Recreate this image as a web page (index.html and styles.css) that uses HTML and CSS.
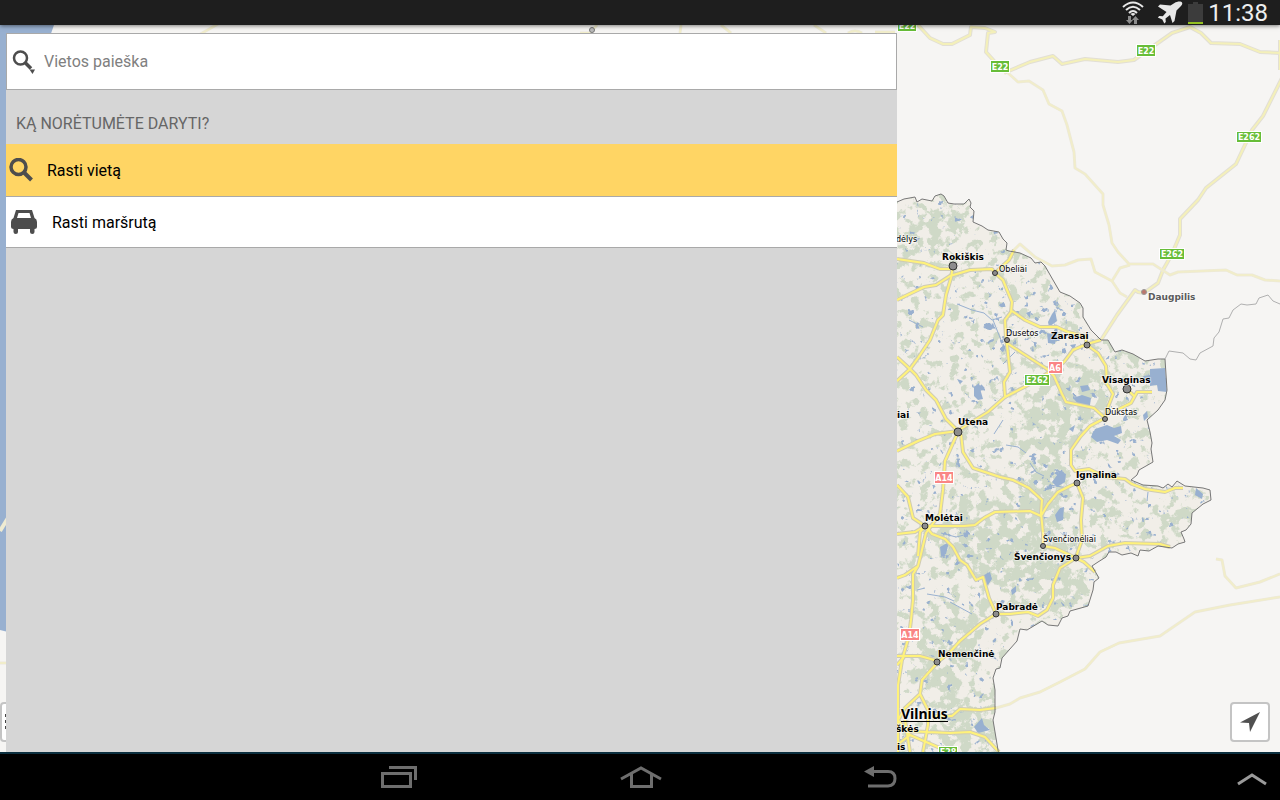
FILE: index.html
```html
<!DOCTYPE html>
<html lang="lt">
<head>
<meta charset="utf-8">
<meta name="viewport" content="width=device-width, initial-scale=1">
<title>Vietos paieška</title>
<link rel="stylesheet" href="styles.css">
</head>
<body>
<header class="status">
  <svg class="status-icon" width="22" height="24" viewBox="0 0 22 24" aria-hidden="true">
    <g fill="none" stroke="#e8e8e8" stroke-width="2"><path d="M1 6Q11-3 21 6"/><path d="M4 9Q11 2.500 18 9"/><path d="M7 12Q11 8 15 12"/></g>
    <path fill="#e8e8e8" d="M8.500 13Q11 11 13.500 13L11 15z"/>
    <path fill="#8c8c8c" d="M6 15h3v4h2l-3.500 4L4 19h2zM12 23v-4h-2l3.500-4 3.500 4h-2v4z"/>
  </svg>
  <svg class="status-icon plane" width="26" height="24" viewBox="0 0 26 24" aria-hidden="true">
    <path fill="#e8e8e8" d="M25 1.500c.8 1.200-.2 2.800-1.500 4L19.500 9.500l-2 10.500-2 2-2.500-8-4.500 3.500.3 3.500-1.500 1.500-2-4-4.500-2 1.500-1.500 3.500.2L9.500 11 1 5.500 3 3.500l10.500 1 4-2.500C20 .5 24 0 25 1.500z"/>
  </svg>
  <svg class="status-icon" width="15" height="24" viewBox="0 0 15 24" aria-hidden="true">
    <path fill="#3c3c3c" d="M0 3h5V1h5v2h5v18H0z"/><path fill="#93c01f" d="M0 21h15v2H0z"/>
  </svg>
  <time class="clock">11:38</time>
</header>

<main class="stage">
  <svg class="map" viewBox="0 25 1280 727" preserveAspectRatio="xMinYMin slice" role="img" aria-label="Lietuva">
    <defs>
      <path id="land" d="M880 208L897 202 904 199 915 197 917 202 922 199 932 201 935 196 941 194 944 196 948 203 954 204 964 204 969 199 971 203 970 207 974 211 973 222 982 226 988 230 999 232 1003 239 1007 243 1006 250 1009 251 1020 253 1031 258 1035 263 1041 262 1045 266 1053 280 1060 292 1070 296 1080 303 1083 308 1083 317 1091 330 1101 340 1108 340 1115 352 1122 350 1133 354 1145 361 1158 359 1165 359 1167 390 1165 400 1158 410 1147 420 1150 432 1152 443 1151 449 1153 462 1146 466 1139 470 1137 475 1131 480 1143 485 1158 486 1163 488 1168 484 1172 487 1177 481 1185 486 1203 488 1210 490 1211 500 1203 504 1192 513 1191 524 1186 530 1181 532 1184 539 1185 542 1178 544 1172 548 1158 546 1149 551 1140 550 1138 556 1131 553 1122 555 1116 552 1109 552 1106 557 1098 562 1092 566 1099 578 1094 582 1093 590 1088 606 1070 611 1068 616 1062 618 1058 626 1048 625 1042 621 1027 630 1020 629 1017 641 1002 658 1000 668 996 669 993 678 995 690 995 712 993 720 999 756 880 756z"/>
      <clipPath id="land-clip"><use href="#land"/></clipPath>
      <filter id="woods" filterUnits="userSpaceOnUse" x="890" y="190" width="330" height="562" color-interpolation-filters="sRGB">
        <feGaussianBlur in="SourceGraphic" stdDeviation="6" result="area"/>
        <feTurbulence type="fractalNoise" baseFrequency="0.1" numOctaves="5" seed="8"/>
        <feColorMatrix values="0 0 0 0 0  0 0 0 0 0  0 0 0 0 0  1 0 0 0 0" result="noise"/>
        <feComposite in="noise" in2="area" operator="arithmetic" k2="1" k3="0.17"/>
        <feColorMatrix values="0 0 0 0 0.81  0 0 0 0 0.85  0 0 0 0 0.78  0 0 0 10 -5.500"/>
      </filter>
      <filter id="ponds" filterUnits="userSpaceOnUse" x="890" y="190" width="330" height="562" color-interpolation-filters="sRGB">
        <feGaussianBlur in="SourceGraphic" stdDeviation="4" result="area"/>
        <feTurbulence type="fractalNoise" baseFrequency="0.13" numOctaves="3" seed="23"/>
        <feColorMatrix values="0 0 0 0 0  0 0 0 0 0  0 0 0 0 0  1 0 0 0 0" result="noise"/>
        <feComposite in="noise" in2="area" operator="arithmetic" k2="1" k3="0.09"/>
        <feColorMatrix values="0 0 0 0 0.6  0 0 0 0 0.69  0 0 0 0 0.81  0 0 0 12 -8.500"/>
      </filter>
      <g id="outer-roads">
        <path d="M918 25L930 38 943 44 952 44 970 35 971 27 985 28 995 32 988 33 986 52 995 62M1004 73L1030 62 1053 56 1062 64 1085 59 1118 62 1134 60 1155 45 1172 33 1190 27 1201 33 1211 43 1240 44 1260 52 1280 53M1282 78L1263 116 1252 130 1236 164 1206 188 1198 200 1180 219 1180 235 1172 254 1163 270 1158 283 1144 293 1138 292 1135 290 1117 315 1101 340M1280 40V70"/>
      </g>
      <g id="minor-roads">
        <path d="M1008 73L1018 82 1029 81 1043 90 1049 104 1062 111 1067 125 1074 152 1075 168 1085 174 1103 194 1103 205 1109 225 1112 243 1118 252 1129 264 1153 264 1170 275 1178 272 1226 270 1237 275 1252 275 1265 280 1280 281M1014 250L1020 244 1035 257 1052 266 1065 265 1078 260 1091 259 1095 272 1112 281 1120 293 1127 297M1112 281L1120 268 1130 265M996 708L1010 704 1020 698 1040 692 1060 682 1085 669 1100 652 1119 643 1160 636 1195 612 1230 605 1280 597M1216 559L1222 560 1225 576 1236 588 1260 582 1280 574M197 36L218 24M580 33H590L597 25M680 33L681 25M721 25L731 33M814 25L826 33M848 33Q855 29 862 33M875 32H895M0 663H8"/>
      </g>
      <g id="main-roads">
        <path d="M897 259L924 263 940 269 952 269M897 300L924 287 936 285 950 276 970 270 992 269 995 273M953 266L951 278 946 295 943 315 938 320 930 340 918 358 910 369 897 381M897 357L910 369 916 375 926 390 936 400 946 419 958 431M1014 250L1009 260 995 273 1003 280 1012 302 1011 312 1005 320 1006 339 1007 345 1010 372 1004 382 1005 396M1012 311L1025 320 1040 327 1057 327 1068 332 1085 336 1087 345M1007 343L1022 353 1047 369 1054 376 1062 394 1066 402 1080 405 1094 408 1105 418M1101 340L1087 344 1073 350 1064 362 1036 381 1005 397 988 412 970 423 958 431"/>
        <path d="M1087 345L1098 353 1106 366 1107 384 1113 394 1108 407 1105 418 1090 426 1080 437 1071 450 1071 465 1075 471 1089 469 1105 477 1125 479 1132 484 1145 489 1165 492 1175 488 1183 488M1117 410L1131 403 1137 392 1152 392M1127 389L1135 397M897 451L918 441 935 434 958 431M958 432L945 461 943 490 940 514 931 526 926 533 921 554 918 566 913 574 913 600 911 620 909 636 902 660 898 685 898 752M918 566L905 575 897 578M925 526L920 532 918 556M961 434L963 452 973 468 1000 477 1013 480 1029 488 1042 500 1041 513 1043 533 1043 546 1055 548 1076 558M925 526H964L975 525 984 518 995 512 1030 511 1041 516 1048 504 1058 492 1070 486 1077 483 1083 498 1081 520 1082 540 1076 557"/>
        <path d="M1095 572L1084 562 1076 558 1090 556 1108 546 1125 543 1160 544 1170 547M1076 558L1060 568 1053 585 1053 598 1047 610 1038 616 1028 612 1010 614 996 614 989 598 983 577 976 580 967 565 960 560 953 547 945 539 932 534 925 526 913 518 908 497 897 485M897 534L915 532 925 526M996 614L980 624 960 641 950 652 938 662 922 680 920 694 905 708 898 720 910 735 940 748M897 656L920 656 938 661M920 694L928 710 928 725 923 752M935 716H952L960 709 980 710 996 708M905 731L950 733 970 732 985 737 999 752M897 665L904 657M905 720L910 752M897 745L910 735"/>
      </g>
    </defs>
    <rect class="abroad" y="25" width="1280" height="1200"/>
    <path class="sea" d="M0 25H54Q48 40 46 60L30 600 8 632 0 630z"/>
    <path class="spit" d="M0 531L8 518"/>
    <use class="land" href="#land"/>
    <g clip-path="url(#land-clip)">
      <g filter="url(#woods)">
        <path d="M905 218L960 210 965 235 925 255 905 250zM1040 375L1110 370 1105 410 1060 450 1070 490 1060 540 1095 590 1060 610 1030 600 1000 580 950 570 930 540 960 500 1010 500 1040 460 1020 430zM930 620L985 600 980 640 950 700 910 680zM945 690L990 700 995 750 940 745zM1085 500L1110 490 1115 515 1090 520zM1180 505L1200 500 1185 535 1160 520zM1100 305L1150 360 1110 360z"/>
      </g>
      <g filter="url(#ponds)">
        <path d="M1000 300L1070 300 1070 340 1010 350 990 390 980 330zM1060 380L1100 390 1090 410 1060 400zM1025 450L1075 460 1060 500 1035 490zM935 525L985 525 970 570 930 545zM985 370L975 385 975 405 985 405z"/>
      </g>
      <g class="lake">
        <path d="M974 387l5-4 2 9 2 7-5 1-4-4zM1143 376l7-1 0-6 15-1 2 24-9-1-1-6-7 1 0-5-5-1zM1095 429l12-4 7 3 7-2 1 7-8 3 7 4-3 4-11-4-10 2-6-5zM1073 398l9-3 9 3-1 7-10 1zM1080 386l8-1 2 5-8 2zM1048 322l4-8 3-4 2 11-8 6zM1047 333l10 2-2 9-7-1zM1060 508l4-1-1 13-6 2-2-7zM1060 471l6 3-1 8-8 5-5-5zM960 384l-3-5 6 2zM974 727l8-9 2 7 6 5-12 3zM1196 488l7 6-1 5-7-4zM1075 425l-6 4 4 3zM940 547l9-5-3 12-5 2zM984 575l6-3 2 7-4 6-5-3zM1011 590l5-4 0 6-4 3zM1143 415l4-4 1 6-4 4zM1026 313l5-2-1 7zM1070 345l6-1-2 6z"/>
        <path class="stream" d="M957 304l15 6 12 3 8 7 10-3M993 320l8 20M1006 445l12 2 8 6M927 594l18 3 9 4M925 588l-8 2M950 602l22 12M941 533l15 4 12-3M1003 420l-9 14M1015 352l-12 12M909 320l8 4 6 3M1148 492l-1 9M1030 463l6 9 8 4M1050 485l18 3"/>
      </g>
    </g>
    <use class="casing outer" href="#outer-roads"/><use class="outer" href="#outer-roads"/>
    <use class="casing minor" href="#minor-roads"/><use class="minor" href="#minor-roads"/>
    <use class="casing" href="#main-roads"/><use class="main-road" href="#main-roads"/>
    <use class="border" href="#land"/>
    <path class="border thin" d="M1165 359L1169 351 1183 353 1190 359 1196 360 1200 353 1213 346 1214 338 1219 332 1223 319 1229 318 1233 310 1241 304 1247 305 1256 304 1259 298 1268 295 1273 301 1280 304"/>
    <g class="town">
      <circle cx="953" cy="266" r="4"/><circle cx="958" cy="432" r="4"/><circle cx="1127" cy="389" r="4"/>
      <circle cx="1087" cy="345" r="3"/><circle cx="925" cy="526" r="3"/><circle cx="1077" cy="483" r="3"/><circle cx="1076" cy="558" r="3"/><circle cx="996" cy="614" r="3"/><circle cx="937" cy="662" r="3"/>
      <circle cx="995" cy="273" r="2.500"/><circle cx="1007" cy="340" r="2.500"/><circle cx="1105" cy="419" r="2.500"/><circle cx="1043" cy="546" r="2.500"/>
      <circle class="faded" cx="592" cy="30" r="2.500"/><circle class="foreign" cx="1144" cy="292" r="2.500"/>
    </g>
    <g class="sign">
      <rect x="898" y="20" width="18" height="11"/><text x="907" y="29">E22</text>
      <rect x="991" y="61" width="18" height="11"/><text x="1000" y="70">E22</text>
      <rect x="1137" y="45" width="18" height="11"/><text x="1146" y="54">E22</text>
      <rect x="1237" y="132" width="24" height="10"/><text x="1249" y="140">E262</text>
      <rect x="1160" y="249" width="24" height="10"/><text x="1172" y="257">E262</text>
      <rect x="1025" y="375" width="24" height="10"/><text x="1037" y="383">E262</text>
      <rect x="939" y="747" width="18" height="11"/><text x="948" y="755">E28</text>
    </g>
    <g class="sign red">
      <rect x="1049" y="362" width="13" height="11"/><text x="1055" y="371">A6</text>
      <rect x="935" y="472" width="18" height="11"/><text x="944" y="481">A14</text>
      <rect x="901" y="629" width="18" height="11"/><text x="910" y="638">A14</text>
    </g>
    <g class="place">
      <text x="942" y="260">Rokiškis</text><text x="1051" y="339">Zarasai</text><text x="1102" y="383">Visaginas</text>
      <text x="958" y="425">Utena</text><text x="1076" y="478">Ignalina</text><text x="925" y="521">Molėtai</text>
      <text x="1014" y="560">Švenčionys</text><text x="996" y="610">Pabradė</text><text x="938" y="657">Nemenčinė</text>
      <text x="897" y="418">iai</text><text x="896" y="732">škės</text><text x="897" y="750">is</text>
      <text class="foreign-name" x="1148" y="300">Daugpilis</text>
    </g>
    <g class="place village">
      <text x="896" y="242">dėlys</text><text x="999" y="272">Obeliai</text><text x="1006" y="336">Dusetos</text>
      <text x="1105" y="415">Dūkstas</text><text x="1043" y="542">Švenčionėliai</text>
    </g>
    <text class="capital" x="901" y="719">Vilnius</text>
    <path class="capital-line" d="M901 721.500H948"/>
  </svg>

  <button class="map-button layers" type="button" aria-label="Meniu">
    <svg width="12" height="16" viewBox="0 0 12 16" aria-hidden="true"><path fill="#444" d="M0 0h3v3H0zM0 6h3v3H0zM0 12h3v3H0zM5 0h7v3H5zM5 6h7v3H5zM5 12h7v3H5z"/></svg>
  </button>
  <button class="map-button locate" type="button" aria-label="Mano vieta">
    <svg width="20" height="20" viewBox="0 0 20 20" aria-hidden="true"><path fill="#505050" d="M20 0L10 20 9 11 0 10.500z"/></svg>
  </button>

  <section class="panel">
    <form class="search">
      <label class="search-label" for="q" aria-label="Vietos paieška">
        <svg width="24" height="24" viewBox="0 0 24 24" aria-hidden="true"><circle cx="8.500" cy="8" r="6.500" fill="none" stroke="#4d4d4d" stroke-width="2.500"/><path d="M13 12.500l6 6" stroke="#4d4d4d" stroke-width="3.500"/><path fill="#4d4d4d" d="M17.500 19.500h5.500L20.500 24z"/></svg>
      </label>
      <input class="search-input" id="q" type="text" placeholder="Vietos paieška">
    </form>
    <h1 class="heading">KĄ NORĖTUMĖTE DARYTI?</h1>
    <ul class="actions">
      <li><button class="action selected" type="button">
        <svg width="24" height="24" viewBox="0 0 24 24" aria-hidden="true"><circle cx="9.500" cy="9" r="7.500" fill="none" stroke="#4d4d4d" stroke-width="3.500"/><path d="M14.500 14l8 8" stroke="#4d4d4d" stroke-width="4"/></svg>
        Rasti vietą</button></li>
      <li><button class="action route" type="button">
        <svg width="26" height="24" viewBox="0 0 26 24" aria-hidden="true"><path fill="#4d4d4d" fill-rule="evenodd" d="M5 0h16l2.500 8Q26 9 26 12v5q0 2-2.500 2v3q0 2-2.200 2T19 22v-3H7v3q0 2-2.200 2t-2.300-2v-3Q0 19 0 17v-5q0-3 2.500-4zm2.500 3L6 8h14l-1.500-5z"/></svg>
        Rasti maršrutą</button></li>
    </ul>
  </section>
</main>

<nav class="navbar" aria-label="Sistema">
  <div class="nav-keys">
    <button class="key" type="button" aria-label="Naujausios"><svg width="38" height="24" viewBox="0 0 38 24" aria-hidden="true"><path fill="none" stroke="#6e6e6e" stroke-width="3" d="M9 2.500h26.500V15M2.500 8.500h28v13h-28z"/></svg></button>
    <button class="key" type="button" aria-label="Pradžia"><svg width="42" height="24" viewBox="0 0 42 24" aria-hidden="true"><path fill="none" stroke="#6e6e6e" stroke-width="3" d="M1 14L21 3l20 11M11.500 9v12.500h20V9"/></svg></button>
    <button class="key" type="button" aria-label="Atgal"><svg width="34" height="24" viewBox="0 0 34 24" aria-hidden="true"><path fill="none" stroke="#6e6e6e" stroke-width="3" d="M8 6.500h16q7 0 7 7t-7 7.500H4"/><path fill="#6e6e6e" d="M0 6.500L10 1v11z"/></svg></button>
  </div>
  <button class="key up" type="button" aria-label="Rodyti"><svg width="30" height="14" viewBox="0 0 30 14" aria-hidden="true"><path fill="none" stroke="#9a9a9a" stroke-width="3" d="M1 12L15 3l14 9"/></svg></button>
</nav>
</body>
</html>
```

FILE: styles.css
```css
* { box-sizing: border-box; }

body {
  margin: 0;
  min-height: 100vh;
  display: grid;
  grid-template-rows: auto 1fr auto;
  font-family: Roboto, "Noto Sans", sans-serif;
  font-size: 16px;
  background: #000;
}

button {
  border: 0;
  padding: 0;
  background: none;
  font: inherit;
  color: inherit;
}

svg { display: block; flex: none; }

.status {
  position: relative;
  z-index: 2;
  display: flex;
  align-items: center;
  justify-content: flex-end;
  gap: 5px;
  height: 25px;
  padding-right: 12px;
  background: #1e1e1e;
  box-shadow: 0 1px 4px rgba(0, 0, 0, 0.5);
}

.plane { margin-left: 8px; }

.clock {
  color: #eee;
  font-size: 24px;
  line-height: 24px;
}

.stage {
  position: relative;
  display: grid;
  grid-template-columns: 891fr 383fr;
  padding: 8px 0 0 6px;
  overflow: hidden;
}

.map {
  position: absolute;
  inset: 0;
  width: 100%;
  height: 100%;
}

.abroad { fill: #f6f5f3; }
.sea { fill: #98b0d0; }
.spit { stroke: #efebd2; stroke-width: 4; }
.land { fill: #f1eee8; }
.lake { fill: #98b0d0; }
.stream { fill: none; stroke: #98b0d0; stroke-width: 1; }

.main-road, .outer, .minor, .casing {
  fill: none;
  stroke-linejoin: round;
}

.casing { stroke: #cfcbb4; stroke-width: 4; }
.main-road { stroke: #fff27a; stroke-width: 2; }
.outer { stroke: #f4f0b9; stroke-width: 2; }
.minor { stroke: #f1edca; stroke-width: 2; }
.casing.outer { stroke: #e2dfd5; stroke-width: 4; }
.casing.minor { stroke: #ebe8dd; stroke-width: 3; }

.border { fill: none; stroke: #777; stroke-width: 1; }
.thin { stroke: #b0b0b0; }

.town { fill: #8c8c8c; stroke: #333; stroke-width: 1; }
.foreign { fill: #bd776b; stroke: #999; }
.faded { fill: #bbb; stroke: #777; }

.sign {
  fill: #67bd38;
  stroke: #fff;
  stroke-width: 2;
  paint-order: stroke;
}

.sign.red { fill: #fa8585; }

.sign text {
  fill: #fff;
  stroke: none;
  font: bold 8px "DejaVu Sans", sans-serif;
  text-anchor: middle;
}

.place {
  font: bold 9px "DejaVu Sans", sans-serif;
  fill: #000;
  stroke: #fff;
  stroke-opacity: 0.5;
  stroke-width: 2;
  paint-order: stroke;
}

.village { font-weight: normal; font-size: 8px; }
.foreign-name { fill: #5c5c5c; }

.capital {
  font: bold 14px "Noto Sans", sans-serif;
  stroke: #fff;
  stroke-opacity: 0.5;
  stroke-width: 2;
  paint-order: stroke;
}

.capital-line { stroke: #000; }

.map-button {
  position: absolute;
  bottom: 10px;
  width: 40px;
  height: 40px;
  display: flex;
  align-items: center;
  justify-content: center;
  background: #fff;
  border: 2px solid #c4c4c4;
  border-radius: 4px;
}

.locate { right: 10px; }

.layers {
  left: 0;
  justify-content: flex-start;
  padding-left: 3px;
}

.panel {
  position: relative;
  background: #d6d6d6;
}

.search {
  display: flex;
  align-items: center;
  height: 57px;
  padding-left: 5px;
  background: #fff;
  border: 1px solid #a9a9a9;
}

.search-input {
  flex: 1;
  min-width: 0;
  height: 100%;
  padding: 0 8px;
  border: 0;
  outline: 0;
  background: none;
  font: inherit;
  color: #000;
}

.search-input::placeholder { color: #808080; opacity: 1; }

.heading {
  margin: 0;
  padding: 22px 10px 8px;
  font-size: 16px;
  font-weight: 400;
  line-height: 24px;
  color: #666;
}

.actions {
  margin: 0;
  padding: 0;
  list-style: none;
}

.action {
  display: flex;
  align-items: center;
  gap: 14px;
  width: 100%;
  height: 51px;
  padding-left: 3px;
  background: #fff;
  border-bottom: 1px solid #a9a9a9;
  color: #000;
  text-align: left;
}

.route { padding-left: 5px; gap: 15px; }

.selected {
  height: 53px;
  background: #ffd564;
}

.navbar {
  display: grid;
  grid-template-columns: 1fr auto 1fr;
  align-items: center;
  height: 48px;
  padding-right: 13px;
  background: #000;
  border-top: 2px solid #0b2f3f;
}

.nav-keys {
  grid-column: 2;
  display: flex;
  gap: 202px;
  padding-left: 10px;
}

.key { display: block; }
.up { justify-self: end; padding-top: 4px; }
```
